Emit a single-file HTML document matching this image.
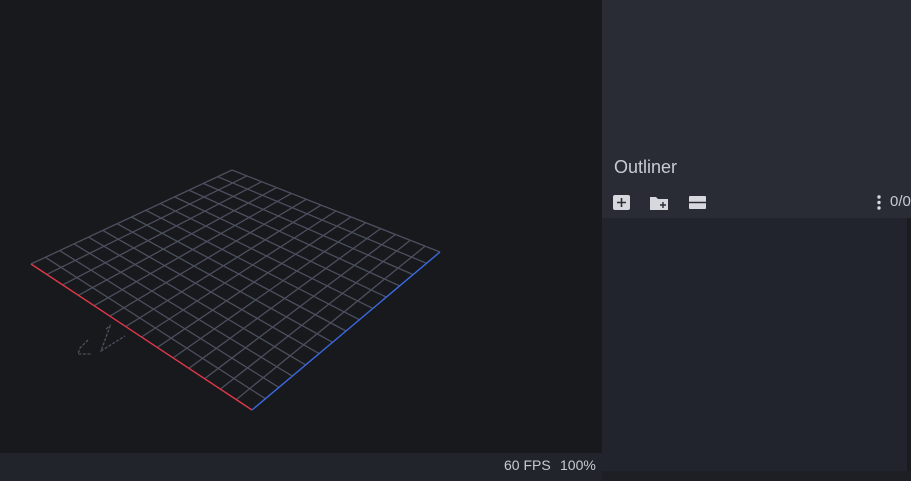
<!DOCTYPE html>
<html><head><style>
body{margin:0;width:911px;height:481px;overflow:hidden;background:#1a1b1f;font-family:"Liberation Sans",sans-serif;position:relative}
.vp{position:absolute;left:0;top:0;width:602px;height:453px;background:#18191d}
.bar{position:absolute;left:0;top:453px;width:602px;height:28px;background:#22242b;color:#c8cbd2;font-size:14px}
.panel{position:absolute;left:602px;top:0;width:309px;height:218px;background:#292c35}
.list{position:absolute;left:602px;top:218px;width:305px;height:253px;background:#21242c}
.bot{position:absolute;left:602px;top:471px;width:309px;height:10px;background:#1d1f25}
.t{position:absolute;color:#c8cbd2}
</style></head><body>
<div class="vp">
<svg width="602" height="453" style="position:absolute;left:0;top:0">
<g stroke="#4b505e" stroke-width="1.3" fill="none">
<line x1="45.4" y1="257.3" x2="265.4" y2="398.7"/><line x1="59.7" y1="250.6" x2="278.9" y2="387.4"/><line x1="74.1" y1="243.9" x2="292.3" y2="376.1"/><line x1="88.4" y1="237.1" x2="305.7" y2="364.9"/><line x1="102.8" y1="230.4" x2="319.1" y2="353.6"/><line x1="117.1" y1="223.7" x2="332.6" y2="342.3"/><line x1="131.5" y1="217" x2="346" y2="331"/><line x1="145.9" y1="210.3" x2="359.4" y2="319.7"/><line x1="160.2" y1="203.6" x2="372.9" y2="308.4"/><line x1="174.6" y1="196.9" x2="386.3" y2="297.1"/><line x1="188.9" y1="190.1" x2="399.7" y2="285.9"/><line x1="203.3" y1="183.4" x2="413.1" y2="274.6"/><line x1="217.6" y1="176.7" x2="426.6" y2="263.3"/><line x1="232" y1="170" x2="440" y2="252"/>
<line x1="31" y1="264" x2="232" y2="170"/><line x1="46.8" y1="274.4" x2="246.9" y2="175.9"/><line x1="62.6" y1="284.9" x2="261.7" y2="181.7"/><line x1="78.4" y1="295.3" x2="276.6" y2="187.6"/><line x1="94.1" y1="305.7" x2="291.4" y2="193.4"/><line x1="109.9" y1="316.1" x2="306.3" y2="199.3"/><line x1="125.7" y1="326.6" x2="321.1" y2="205.1"/><line x1="141.5" y1="337" x2="336" y2="211"/><line x1="157.3" y1="347.4" x2="350.9" y2="216.9"/><line x1="173.1" y1="357.9" x2="365.7" y2="222.7"/><line x1="188.9" y1="368.3" x2="380.6" y2="228.6"/><line x1="204.6" y1="378.7" x2="395.4" y2="234.4"/><line x1="220.4" y1="389.1" x2="410.3" y2="240.3"/><line x1="236.2" y1="399.6" x2="425.1" y2="246.1"/>
<path d="M88 340 L80 348 L78 354 L92 354 M106 329 L110 326 L101 351 L125 336" stroke-dasharray="3 1.5"/>
</g>
<line x1="31" y1="264" x2="252" y2="410" stroke="#e0384a" stroke-width="1.4"/>
<line x1="252" y1="410" x2="440" y2="252" stroke="#3a6ae0" stroke-width="1.4"/>
</svg>
</div>
<div class="bar"><span class="t" style="left:504px;top:4px">60 FPS</span><span class="t" style="left:560px;top:4px">100%</span></div>
<div class="panel">
<div class="t" style="left:12px;top:157px;font-size:18px">Outliner</div>
<svg width="309" height="30" style="position:absolute;left:0;top:190px">
<rect x="11" y="5" width="17" height="15" rx="2" fill="#d6d8de"/><path d="M19.5 8v9M15 12.5h9" stroke="#292c35" stroke-width="1.6"/>
<path d="M48 7h6l2 2h10v11H48z" fill="#d6d8de"/><path d="M61 12v6M58 15h6" stroke="#292c35" stroke-width="1.4"/>
<rect x="87" y="6" width="17" height="13" rx="1" fill="#d6d8de"/><line x1="87" y1="12.5" x2="104" y2="12.5" stroke="#292c35" stroke-width="1.5"/>
<circle cx="277" cy="7" r="1.7" fill="#d6d8de"/><circle cx="277" cy="12.5" r="1.7" fill="#d6d8de"/><circle cx="277" cy="18" r="1.7" fill="#d6d8de"/>
</svg>
<div class="t" style="left:288px;top:193px;font-size:15px">0/0</div>
</div>
<div class="list"></div>
<div class="bot"></div>
</body></html>
